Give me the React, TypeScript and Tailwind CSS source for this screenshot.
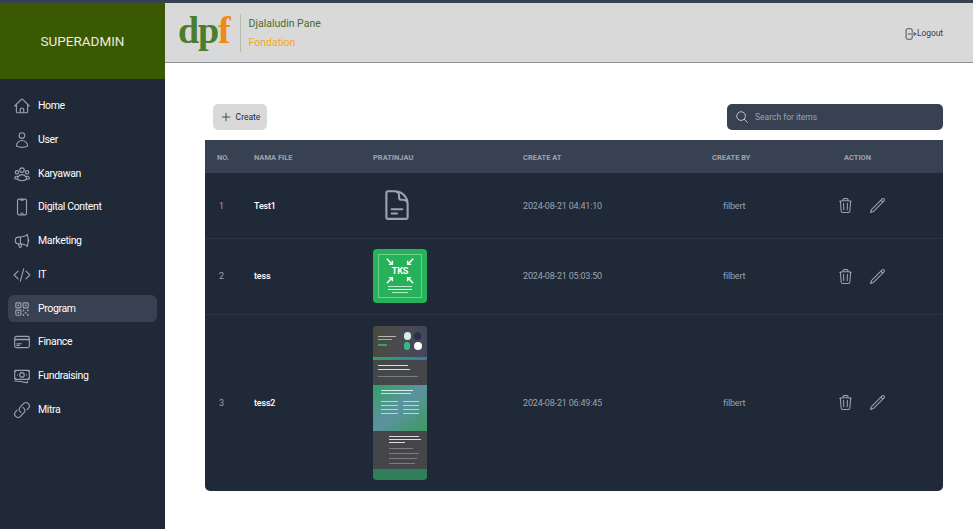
import React from "react"
import {
  HiOutlineArrowRightOnRectangle,
  HiOutlineBanknotes,
  HiOutlineCodeBracket,
  HiOutlineCreditCard,
  HiOutlineDevicePhoneMobile,
  HiOutlineDocumentText,
  HiOutlineHome,
  HiOutlineLink,
  HiOutlineMagnifyingGlass,
  HiOutlineMegaphone,
  HiOutlinePencil,
  HiOutlinePlus,
  HiOutlineQrCode,
  HiOutlineTrash,
  HiOutlineUser,
  HiOutlineUserGroup,
} from "react-icons/hi2"

const menu = [
  { label: "Home", icon: HiOutlineHome },
  { label: "User", icon: HiOutlineUser },
  { label: "Karyawan", icon: HiOutlineUserGroup },
  { label: "Digital Content", icon: HiOutlineDevicePhoneMobile },
  { label: "Marketing", icon: HiOutlineMegaphone },
  { label: "IT", icon: HiOutlineCodeBracket },
  { label: "Program", icon: HiOutlineQrCode, active: true },
  { label: "Finance", icon: HiOutlineCreditCard },
  { label: "Fundraising", icon: HiOutlineBanknotes },
  { label: "Mitra", icon: HiOutlineLink },
]

const Arrow = ({ className }: { className: string }) => (
  <svg viewBox="0 0 10 10" className={`w-[8px] h-[8px] ${className}`} fill="none" stroke="white" strokeWidth="1.8">
    <path d="M1 1l7 7M8 3.5V8H3.5" />
  </svg>
)

// kartu hijau TKS
const TksThumb = () => (
  <div className="w-[54px] h-[54px] rounded-[4px] bg-[#25b25a] p-[5px]">
    <div className="h-full border border-[#6fd08f] flex flex-col items-center pt-[3px]">
      <div className="flex gap-[12px]">
        <Arrow className="" />
        <Arrow className="rotate-90" />
      </div>
      <div className="text-[9px] leading-[10px] font-bold text-white">TKS</div>
      <div className="flex gap-[12px]">
        <Arrow className="-rotate-90" />
        <Arrow className="rotate-180" />
      </div>
      <div className="w-[24px] h-px mt-[2px] bg-white/70" />
      <div className="w-[24px] border-t border-white mt-[2px]" />
      <div className="w-[16px] h-px mt-[2px] bg-white/70" />
    </div>
  </div>
)

const Line = ({ className }: { className: string }) => <div className={`h-px ${className}`} />

// halaman web kecil
const PageThumb = () => (
  <div className="w-[54px] h-[154px] rounded-[4px] overflow-hidden bg-[#454649] flex flex-col blur-[0.5px]">
    <div className="h-[31px] bg-gradient-to-r from-[#4a4a40] via-[#4a4a52] to-[#45465a] flex items-center justify-between px-[5px]">
      <div className="flex flex-col gap-[2px]">
        <Line className="w-[18px] bg-white/60" />
        <Line className="w-[14px] bg-white/50" />
        <div className="w-[9px] h-[2px] mt-[2px] bg-[#2fa36a]" />
      </div>
      <div className="grid grid-cols-2 gap-[2px]">
        <div className="w-[7px] h-[8px] bg-[#d5efe2] rounded-sm" />
        <div className="w-[7px] h-[8px] bg-[#26304f] rounded-sm" />
        <div className="w-[6px] h-[8px] bg-[#34b98a] rounded-sm" />
        <div className="w-[8px] h-[8px] bg-white rounded-full" />
      </div>
    </div>
    <div className="h-[3px] bg-gradient-to-r from-[#2fa35f] to-[#3a78a8]" />
    <div className="h-[25px] px-[5px] pt-[5px] flex flex-col gap-[3px]">
      <Line className="w-[30px] bg-white/80" />
      <Line className="w-[32px] bg-white/80" />
      <Line className="w-[40px] bg-white/30 mt-[3px]" />
    </div>
    <div className="h-[46px] bg-gradient-to-br from-[#2f9f62] via-[#5b92a0] to-[#3b9a5c] px-[8px] pt-[5px] flex flex-col gap-[2px]">
      <Line className="w-[32px] bg-white/80" />
      <Line className="w-[30px] bg-white/70" />
      <div className="grid grid-cols-2 gap-x-[5px] gap-y-[3px] mt-[5px]">
        {[0, 1, 2, 3, 4, 5, 6, 7].map((i) => (
          <Line key={i} className="bg-white/60" />
        ))}
      </div>
    </div>
    <div className="flex-1 pl-[16px] pr-[4px] pt-[5px] flex flex-col gap-[2px]">
      <Line className="w-[30px] bg-white/80" />
      <Line className="w-[32px] bg-white/80" />
      <Line className="w-[16px] bg-white/80" />
      <Line className="w-[24px] bg-white/30 mt-[3px]" />
      <Line className="w-[30px] bg-white/30 mt-[2px]" />
      <Line className="w-[28px] bg-white/30 mt-[2px]" />
      <Line className="w-[26px] bg-white/30 mt-[2px]" />
    </div>
    <div className="h-[11px] bg-[#2f7f5a]" />
  </div>
)

const rows = [
  { no: "1", name: "Test1", date: "2024-08-21 04:41:10", h: "h-[65px]", preview: <HiOutlineDocumentText className="w-[34px] h-[34px] ml-[7px] text-[#9ca3af]" /> },
  { no: "2", name: "tess", date: "2024-08-21 05:03:50", h: "h-[76px]", preview: <TksThumb /> },
  { no: "3", name: "tess2", date: "2024-08-21 06:49:45", h: "h-[177px]", preview: <PageThumb /> },
]

const App = () => {
  return (
    <div className="h-screen overflow-hidden flex flex-col bg-white font-['Roboto',sans-serif]">
      <div className="h-[3px] bg-[#374151]" />
      <div className="flex flex-1 min-h-0">
        {/* Sidebar */}
        <aside className="w-[165px] bg-[#1f2937] flex flex-col">
          <div className="h-[76px] bg-[#3b5900] flex items-center justify-center text-[13.5px] text-[#e8ecdf]">
            SUPERADMIN
          </div>
          <nav className="px-[8px] pt-[13.5px] flex flex-col gap-[6.75px]">
            {menu.map((m) => (
              <div
                key={m.label}
                className={`h-[27px] rounded-[6px] flex items-center gap-[7px] pl-[5px] text-[10.5px] tracking-[-0.035em] text-white ${m.active ? "bg-[#374151]" : ""}`}
              >
                <m.icon className="w-[18px] h-[18px] text-[#9ca3af]" />
                {m.label}
              </div>
            ))}
          </nav>
        </aside>

        <div className="flex-1 flex flex-col min-w-0">
          {/* Header */}
          <header className="h-[60px] bg-[#d9d9d9] border-b border-[#8b8f98] flex items-center pl-[13px] pr-[30px]">
            <div className="font-['Liberation_Serif',serif] font-bold text-[38px] leading-none tracking-[-0.03em] text-[#4a7d2c] pb-[6px]">
              dp<span className="text-[#f08a12]">f</span>
            </div>
            <div className="w-px h-[38px] bg-[#b4bcaa] ml-[10px] mr-[8px]" />
            <div className="flex flex-col gap-[5px] pt-[2px] text-[10.5px] leading-[14px]">
              <span className="text-[#4a6b2a]">Djalaludin Pane</span>
              <span className="text-[#f5a623]">Fondation</span>
            </div>
            <div className="ml-auto mt-[2px] flex items-center text-[8.5px] tracking-[-0.01em] text-[#374151]">
              <HiOutlineArrowRightOnRectangle className="w-[14px] h-[14px]" />
              Logout
            </div>
          </header>

          {/* Konten */}
          <main className="flex-1 pl-[40px] pr-[30px] pt-[41px]">
            <div className="flex items-center justify-between pl-[8px] mb-[10px]">
              <button className="h-[26px] w-[54px] rounded-[5px] bg-[#d9d9d9] flex items-center justify-center gap-[4px] text-[8.5px] text-[#1f2937]">
                <HiOutlinePlus className="w-[12px] h-[12px]" />
                Create
              </button>
              <div className="w-[216px] h-[26px] rounded-[5px] bg-[#374151] flex items-center gap-[6px] pl-[8px] text-[8.5px] text-[#9ca3af]">
                <HiOutlineMagnifyingGlass className="w-[14px] h-[14px] text-[#d1d5db]" />
                Search for items
              </div>
            </div>

            <div className="rounded-b-[5px] overflow-hidden bg-[#1f2937]">
              <table className="w-[738px] table-fixed text-left">
                <thead className="bg-[#374151] text-[7.5px] uppercase text-[#9ca3af]">
                  <tr className="h-[33px]">
                    <th className="w-[49px] pl-[12px] pt-[2px] font-bold">No.</th>
                    <th className="w-[119px] pt-[2px] font-bold">Nama File</th>
                    <th className="w-[150px] pt-[2px] font-bold">Pratinjau</th>
                    <th className="w-[189px] pt-[2px] font-bold">Create At</th>
                    <th className="w-[132px] pt-[2px] font-bold">Create By</th>
                    <th className="pt-[2px] font-bold">Action</th>
                  </tr>
                </thead>
                <tbody className="text-[9px] tracking-[-0.02em] text-[#9ca3af]">
                  {rows.map((r, i) => (
                    <tr key={r.no} className={`${r.h} ${i < 2 ? "border-b border-[#2b3543]" : ""}`}>
                      <td className="pl-[14px] pt-[2px]">{r.no}</td>
                      <td className="pt-[2px] font-medium text-white">{r.name}</td>
                      <td>{r.preview}</td>
                      <td className="pt-[2px]">{r.date}</td>
                      <td className="pl-[11px] pt-[2px]">filbert</td>
                      <td>
                        <div className="flex items-center gap-[15px] -ml-[7px]">
                          <HiOutlineTrash className="w-[17px] h-[17px] text-[#9ca3af]" />
                          <HiOutlinePencil className="w-[17px] h-[17px] text-[#9ca3af]" />
                        </div>
                      </td>
                    </tr>
                  ))}
                </tbody>
              </table>
            </div>
          </main>
        </div>
      </div>
    </div>
  )
}

export default App
